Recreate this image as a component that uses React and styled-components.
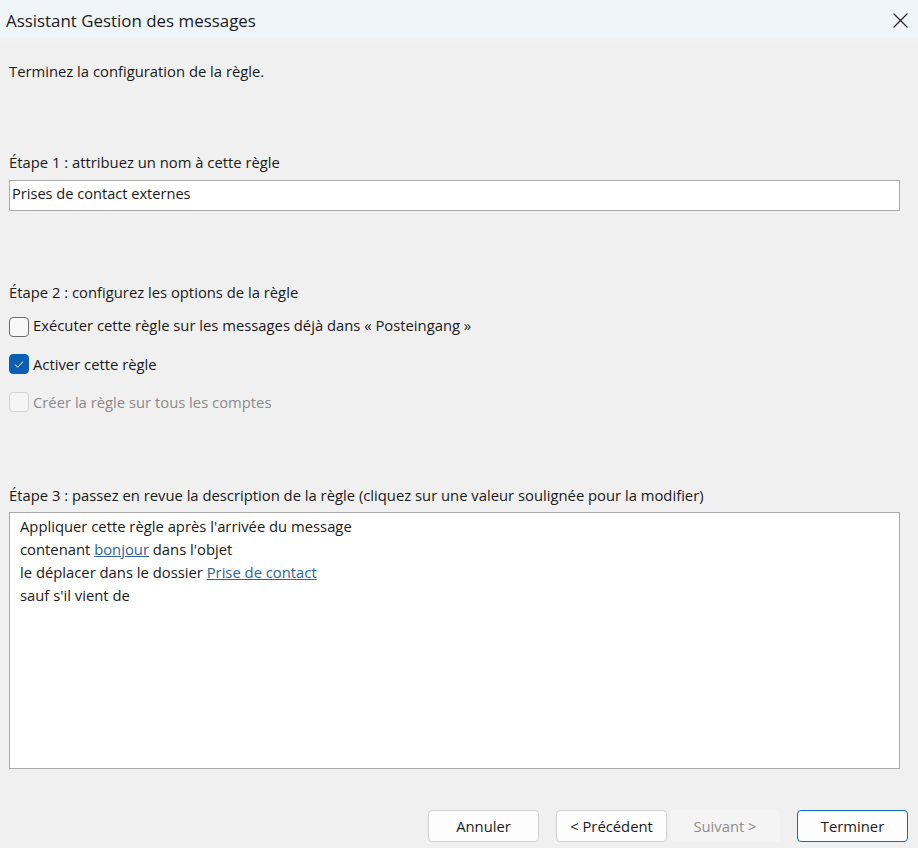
import React from "react";
import styled, { createGlobalStyle } from "styled-components";

const Global = createGlobalStyle`
  html, body { margin: 0; padding: 0; background: #f0f0f0; }
  body { font-family: "Open Sans", "Noto Sans", "Liberation Sans", sans-serif; color: #1a1a1a; }
`;

const Window = styled.div`
  width: 918px;
  height: 848px;
  overflow: hidden;
  display: flex;
  flex-direction: column;
  background: linear-gradient(180deg, #f0f5f9 0, #f0f5f9 35px, #f0f0f0 46px);
`;

const TitleBar = styled.header`
  height: 43px;
  flex: none;
  display: flex;
  align-items: center;
  justify-content: space-between;
  padding: 0 10px 2px 6px;
  box-sizing: border-box;
`;

const Title = styled.h1`
  margin: 0;
  font-size: 16.9px;
  font-weight: 400;
  color: #1c1c1c;
`;

const CloseButton = styled.button`
  all: unset;
  display: flex;
  width: 15px;
  height: 15px;
`;

const Body = styled.main`
  flex: 1;
  display: flex;
  flex-direction: column;
  padding: 0 18px 0 9px;
`;

const Label = styled.p`
  margin: ${(p) => p.$top}px 0 0;
  height: 20px;
  line-height: 20px;
  font-size: 14.8px;
  white-space: nowrap;
`;

const NameField = styled.div`
  margin-top: 8px;
  height: 31px;
  box-sizing: border-box;
  border: 1px solid #a9a9a9;
  background: #fff;
  padding: 0 2px;
  line-height: 25px;
  font-size: 14.6px;
`;

const Option = styled.div`
  display: flex;
  align-items: center;
  gap: 4px;
  height: 20px;
  margin-top: ${(p) => p.$top}px;
  font-size: 14.8px;
  white-space: nowrap;
  color: ${(p) => (p.$disabled ? "#8a8a8a" : "inherit")};
`;

const OptionText = styled.span`
  padding-bottom: ${(p) => p.$lift || 0}px;
`;

const Box = styled.span`
  flex: none;
  width: 20px;
  height: 20px;
  box-sizing: border-box;
  border-radius: 4px;
  display: flex;
  align-items: center;
  justify-content: center;
  border: 1px solid ${(p) => (p.$checked ? "#0a5fb4" : p.$disabled ? "#d4d4d4" : "#6c6c6c")};
  background: ${(p) => (p.$checked ? "#0a5fb4" : p.$disabled ? "#f5f5f5" : "#f8f8f8")};
`;

const Description = styled.div`
  margin-top: 7px;
  height: 257px;
  box-sizing: border-box;
  border: 1px solid #a9a9a9;
  background: #fff;
  padding: 2px 10px;
  font-size: 14.8px;
  line-height: 23px;
`;

const Value = styled.a`
  color: #2f6494;
  text-decoration: underline;
`;

const Footer = styled.footer`
  display: flex;
  justify-content: flex-end;
  margin: 41px -8px 0 0;
`;

const Action = styled.button`
  all: unset;
  flex: none;
  box-sizing: border-box;
  width: ${(p) => (p.$disabled ? 110 : 111)}px;
  height: 32px;
  margin-left: ${(p) => p.$gap}px;
  border-radius: 4px;
  text-align: center;
  font-size: 14.8px;
  line-height: 30px;
  border: 1px solid ${(p) => (p.$primary ? "#0f6cbd" : p.$disabled ? "#f4f4f4" : "#d2d2d2")};
  background: ${(p) => (p.$disabled ? "#f4f4f4" : "#fdfdfd")};
  color: ${(p) => (p.$disabled ? "#8e8e8e" : "#1a1a1a")};
`;

export default function App() {
  return (
    <Window>
      <Global />
      <TitleBar>
        <Title>Assistant Gestion des messages</Title>
        <CloseButton aria-label="Fermer">
          <svg width="15" height="15" viewBox="0 0 15 15" fill="none" stroke="#222" strokeWidth="1.2">
            <path d="M.5.5l14 14M14.500 .5l-14 14" />
          </svg>
        </CloseButton>
      </TitleBar>
      <Body>
        <Label $top={18}>Terminez la configuration de la règle.</Label>
        <Label $top={71}>Étape 1 : attribuez un nom à cette règle</Label>
        <NameField>Prises de contact externes</NameField>
        <Label $top={71}>Étape 2 : configurez les options de la règle</Label>
        <Option $top={15}>
          <Box />
          <OptionText $lift={5}>Exécuter cette règle sur les messages déjà dans « Posteingang »</OptionText>
        </Option>
        <Option $top={17}>
          <Box $checked>
            <svg width="12" height="12" viewBox="0 0 12 12" fill="none" stroke="#fff" strokeWidth="1">
              <path d="M2 6.500l2.800 2.800L10 3.500" />
            </svg>
          </Box>
          <OptionText>Activer cette règle</OptionText>
        </Option>
        <Option $top={18} $disabled>
          <Box $disabled />
          <OptionText $lift={1}>Créer la règle sur tous les comptes</OptionText>
        </Option>
        <Label $top={73}>Étape 3 : passez en revue la description de la règle (cliquez sur une valeur soulignée pour la modifier)</Label>
        <Description>
          <div>Appliquer cette règle après l'arrivée du message</div>
          <div>contenant <Value>bonjour</Value> dans l'objet</div>
          <div>le déplacer dans le dossier <Value>Prise de contact</Value></div>
          <div>sauf s'il vient de</div>
        </Description>
        <Footer>
          <Action>Annuler</Action>
          <Action $gap={17}>&lt; Précédent</Action>
          <Action $gap={3} $disabled>Suivant &gt;</Action>
          <Action $gap={17} $primary>Terminer</Action>
        </Footer>
      </Body>
    </Window>
  );
}
